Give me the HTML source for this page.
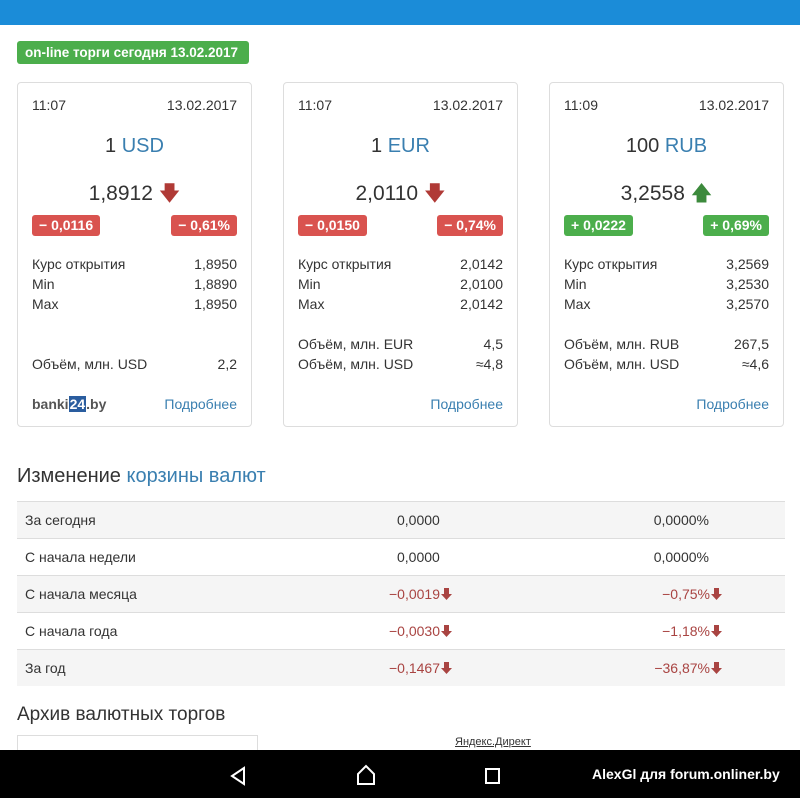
<!DOCTYPE html><html><head><meta charset="utf-8"><style>
*{margin:0;padding:0;box-sizing:border-box}
html,body{width:800px;height:798px;overflow:hidden}
body{background:#fff;font-family:"Liberation Sans",sans-serif;color:#333;position:relative}
.top{position:absolute;left:0;top:0;width:800px;height:25px;background:#1b8cd8}
.badge{position:absolute;left:17px;top:41px;height:23px;width:232px;background:#4cae4c;color:#fff;font-weight:bold;font-size:13.5px;line-height:23px;padding-left:8px;border-radius:3px}
.card{position:absolute;top:82px;width:235px;height:345px;border:1px solid #ddd;border-radius:4px;font-size:14px}
.a{position:absolute}
.blue{color:#3a7fb0}
.red{background:#d9534f}.grn{background:#4cae4c}
.pill{position:absolute;top:132px;height:21px;color:#fff;font-weight:bold;font-size:14px;line-height:21px;padding:0 7px;border-radius:3px}
.row{position:absolute;left:14px;right:14px;height:20px}
.row span:last-child{position:absolute;right:0}
h2{position:absolute;left:17px;font-weight:normal;font-size:20px;color:#333}
.tr{position:absolute;left:17px;width:768px;height:37px;font-size:14px;line-height:37px;border-top:1px solid #ddd}
.g{background:#f5f5f5}
.tr .c1{position:absolute;left:8px}.tr .c2{position:absolute;left:380px}.tr .c3{position:absolute;right:76px}
.dn{color:#a94442}
.dn svg{vertical-align:-1px;margin-left:1px}
.nav{position:absolute;left:0;top:750px;width:800px;height:48px;background:#000}
</style></head><body>
<div class="top"></div>
<div class="badge">on-line торги сегодня 13.02.2017</div>

<div class="card" style="left:17px">
<div class="a" style="left:14px;top:14px">11:07</div><div class="a" style="right:14px;top:14px">13.02.2017</div>
<div class="a" style="left:0;right:0;top:52px;text-align:center;font-size:20px">1 <span class="blue">USD</span></div>
<div class="a" style="left:0;right:0;top:96px;text-align:center;font-size:21px">1,8912 <span style="color:#b03a36">&#129095;</span></div>
<div class="pill red" style="left:14px">− 0,0116</div><div class="pill red" style="right:14px">− 0,61%</div>
<div class="row" style="top:173px"><span>Курс открытия</span><span>1,8950</span></div>
<div class="row" style="top:193px"><span>Min</span><span>1,8890</span></div>
<div class="row" style="top:213px"><span>Max</span><span>1,8950</span></div>
<div class="row" style="top:273px"><span>Объём, млн. USD</span><span>2,2</span></div>
<div class="a" style="left:14px;top:313px;font-weight:bold;color:#555">banki<span style="background:#2a5d9f;color:#fff;padding:0 1px">24</span>.by</div>
<div class="a blue" style="right:14px;top:313px">Подробнее</div>
</div>

<div class="card" style="left:283px">
<div class="a" style="left:14px;top:14px">11:07</div><div class="a" style="right:14px;top:14px">13.02.2017</div>
<div class="a" style="left:0;right:0;top:52px;text-align:center;font-size:20px">1 <span class="blue">EUR</span></div>
<div class="a" style="left:0;right:0;top:96px;text-align:center;font-size:21px">2,0110 <span style="color:#b03a36">&#129095;</span></div>
<div class="pill red" style="left:14px">− 0,0150</div><div class="pill red" style="right:14px">− 0,74%</div>
<div class="row" style="top:173px"><span>Курс открытия</span><span>2,0142</span></div>
<div class="row" style="top:193px"><span>Min</span><span>2,0100</span></div>
<div class="row" style="top:213px"><span>Max</span><span>2,0142</span></div>
<div class="row" style="top:253px"><span>Объём, млн. EUR</span><span>4,5</span></div>
<div class="row" style="top:273px"><span>Объём, млн. USD</span><span>≈4,8</span></div>
<div class="a blue" style="right:14px;top:313px">Подробнее</div>
</div>

<div class="card" style="left:549px">
<div class="a" style="left:14px;top:14px">11:09</div><div class="a" style="right:14px;top:14px">13.02.2017</div>
<div class="a" style="left:0;right:0;top:52px;text-align:center;font-size:20px">100 <span class="blue">RUB</span></div>
<div class="a" style="left:0;right:0;top:96px;text-align:center;font-size:21px">3,2558 <span style="color:#3c8a3c">&#129093;</span></div>
<div class="pill grn" style="left:14px">+ 0,0222</div><div class="pill grn" style="right:14px">+ 0,69%</div>
<div class="row" style="top:173px"><span>Курс открытия</span><span>3,2569</span></div>
<div class="row" style="top:193px"><span>Min</span><span>3,2530</span></div>
<div class="row" style="top:213px"><span>Max</span><span>3,2570</span></div>
<div class="row" style="top:253px"><span>Объём, млн. RUB</span><span>267,5</span></div>
<div class="row" style="top:273px"><span>Объём, млн. USD</span><span>≈4,6</span></div>
<div class="a blue" style="right:14px;top:313px">Подробнее</div>
</div>

<h2 style="top:465px">Изменение <span class="blue">корзины валют</span></h2>
<div class="tr g" style="top:501px"><span class="c1">За сегодня</span><span class="c2">0,0000</span><span class="c3">0,0000%</span></div>
<div class="tr" style="top:538px"><span class="c1">С начала недели</span><span class="c2">0,0000</span><span class="c3">0,0000%</span></div>
<div class="tr g" style="top:575px"><span class="c1">С начала месяца</span><span class="c2 dn" style="left:372px">−0,0019<svg width="11" height="12"><path d="M3 0h5v6h3L5.5 12 0 6h3z" fill="#a94442"/></svg></span><span class="c3 dn" style="right:63px">−0,75%<svg width="11" height="12"><path d="M3 0h5v6h3L5.5 12 0 6h3z" fill="#a94442"/></svg></span></div>
<div class="tr" style="top:612px"><span class="c1">С начала года</span><span class="c2 dn" style="left:372px">−0,0030<svg width="11" height="12"><path d="M3 0h5v6h3L5.5 12 0 6h3z" fill="#a94442"/></svg></span><span class="c3 dn" style="right:63px">−1,18%<svg width="11" height="12"><path d="M3 0h5v6h3L5.5 12 0 6h3z" fill="#a94442"/></svg></span></div>
<div class="tr g" style="top:649px"><span class="c1">За год</span><span class="c2 dn" style="left:372px">−0,1467<svg width="11" height="12"><path d="M3 0h5v6h3L5.5 12 0 6h3z" fill="#a94442"/></svg></span><span class="c3 dn" style="right:63px">−36,87%<svg width="11" height="12"><path d="M3 0h5v6h3L5.5 12 0 6h3z" fill="#a94442"/></svg></span></div>

<h2 style="top:704px;font-size:19px">Архив валютных торгов</h2>
<div class="a" style="left:17px;top:735px;width:241px;height:20px;border:1px solid #ddd"></div>
<div class="a" style="left:455px;top:736px;font-size:11px;text-decoration:underline;color:#333">Яндекс.Директ</div>
<div class="nav">
<svg class="a" style="left:228px;top:16px" width="20" height="20"><path d="M16 2 L4 10 L16 18 Z" fill="none" stroke="#fff" stroke-width="2"/></svg>
<svg class="a" style="left:355px;top:14px" width="22" height="22"><path d="M3 20 V10 L11 2 L19 10 V20 Z" fill="none" stroke="#fff" stroke-width="2"/></svg>
<svg class="a" style="left:484px;top:17px" width="18" height="18"><rect x="2" y="2" width="13" height="14" fill="none" stroke="#fff" stroke-width="2"/></svg>
<div class="a" style="left:592px;top:16px;color:#fff;font-weight:bold;font-size:14px">AlexGl для forum.onliner.by</div>
</div>
</body></html>
